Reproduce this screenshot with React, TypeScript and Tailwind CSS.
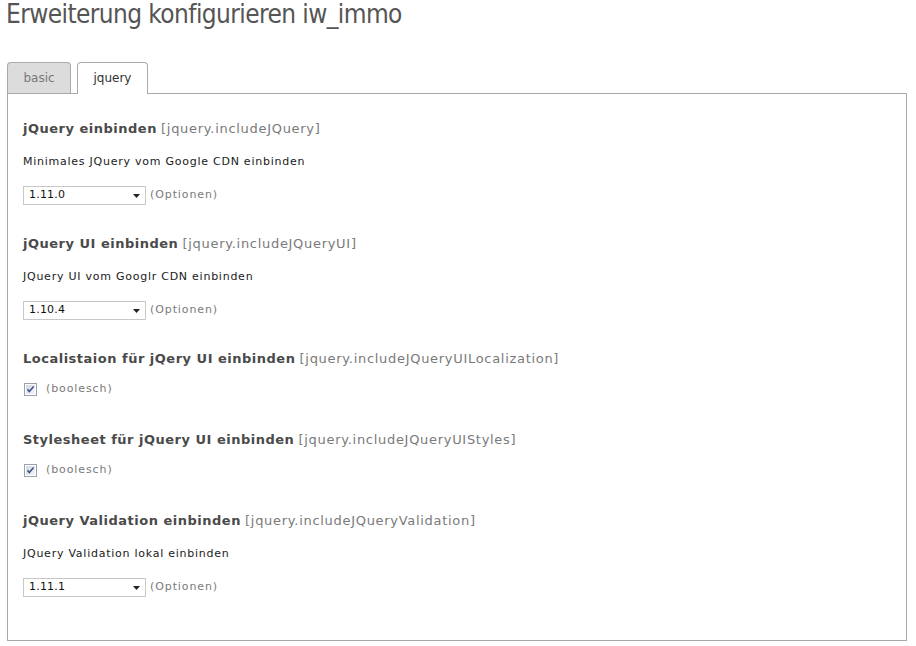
import React from "react";

const body = { fontFamily: '"DejaVu Sans", Verdana, sans-serif' };

function Heading({ title, keyName }: { title: string; keyName: string }) {
  return (
    <div className="h-[16px] leading-[16px] text-[13px] whitespace-nowrap" style={body}>
      <span className="font-bold text-[#4a4a4a] tracking-[0.5px]">{title}</span>{" "}
      <span className="text-[#7a7a7a] tracking-[0.7px]">[{keyName}]</span>
    </div>
  );
}

function Select({ value }: { value: string }) {
  return (
    <div className="mt-[16px] flex items-center h-[19px]" style={body}>
      <div className="w-[123px] h-[19px] border border-[#c8c8c8] bg-white flex items-center justify-between pl-[5px] pr-[5px] text-[11px] text-[#111]">
        <span className="tracking-[0.2px]">{value}</span>
        <svg width="7" height="4" viewBox="0 0 7 4">
          <path d="M0 0 H7 L3.5 4 Z" fill="#222" />
        </svg>
      </div>
      <span className="ml-[4px] text-[11px] text-[#7a7a7a] tracking-[0.9px]">(Optionen)</span>
    </div>
  );
}

function Check() {
  return (
    <div className="mt-[15px] h-[14px] flex items-center" style={body}>
      <svg width="13" height="13" viewBox="0 0 13 13" className="ml-px">
        <defs>
          <linearGradient id="cb" x1="0" y1="0" x2="1" y2="1">
            <stop offset="0" stopColor="#cfd6e4" />
            <stop offset="1" stopColor="#f5f6f9" />
          </linearGradient>
        </defs>
        <rect x="0.5" y="0.5" width="12" height="12" fill="#fff" stroke="#9aa2b0" />
        <rect x="2" y="2" width="9" height="9" fill="url(#cb)" />
        <path d="M3.5 6.2 L5.3 8.6 L9.6 3.6" fill="none" stroke="#3d4f80" strokeWidth="1.5" />
      </svg>
      <span className="ml-[9px] text-[11px] text-[#7a7a7a] tracking-[0.9px]">(boolesch)</span>
    </div>
  );
}

function Desc({ text }: { text: string }) {
  return (
    <div className="mt-[17px] h-[16px] leading-[16px] text-[11px] text-[#1a1a1a] tracking-[0.75px] whitespace-nowrap" style={body}>
      {text}
    </div>
  );
}

export default function App() {
  return (
    <div className="w-[916px] h-[646px] bg-white overflow-hidden">
      <h1
        className="pl-[6px] pt-0 -mt-[1px] text-[26px] leading-[30px] tracking-[-0.6px] text-[#555] font-normal whitespace-nowrap"
        style={{ fontFamily: '"Liberation Sans Narrow", "DejaVu Sans Condensed", "Roboto Condensed", sans-serif' }}
      >
        Erweiterung konfigurieren iw_immo
      </h1>

      <div className="px-[7px] mt-[33px] w-[914px]">
        <div className="flex items-end h-[31px] gap-[6px]" style={body}>
          <div className="w-[64px] h-[31px] border border-b-0 border-[#aaa] rounded-t-[4px] bg-[#dcdcdc] flex items-center justify-center text-[12px] text-[#777]">
            basic
          </div>
          <div className="relative -mb-px w-[71px] h-[32px] border border-b-0 border-[#aaa] rounded-t-[4px] bg-white flex items-center justify-center text-[12px] text-[#333] pb-[1px]">
            jquery
          </div>
        </div>
        <div className="border border-[#aaa] h-[548px] pl-[15px] pt-[27px]">
          <Heading title="jQuery einbinden" keyName="jquery.includeJQuery" />
          <Desc text="Minimales JQuery vom Google CDN einbinden" />
          <Select value="1.11.0" />

          <div className="mt-[31px]">
            <Heading title="jQuery UI einbinden" keyName="jquery.includeJQueryUI" />
            <Desc text="JQuery UI vom Googlr CDN einbinden" />
            <Select value="1.10.4" />
          </div>

          <div className="mt-[31px]">
            <Heading title="Localistaion für jQery UI einbinden" keyName="jquery.includeJQueryUILocalization" />
            <Check />
          </div>

          <div className="mt-[36px]">
            <Heading title="Stylesheet für jQuery UI einbinden" keyName="jquery.includeJQueryUIStyles" />
            <Check />
          </div>

          <div className="mt-[36px]">
            <Heading title="jQuery Validation einbinden" keyName="jquery.includeJQueryValidation" />
            <Desc text="JQuery Validation lokal einbinden" />
            <Select value="1.11.1" />
          </div>
        </div>
      </div>
    </div>
  );
}
